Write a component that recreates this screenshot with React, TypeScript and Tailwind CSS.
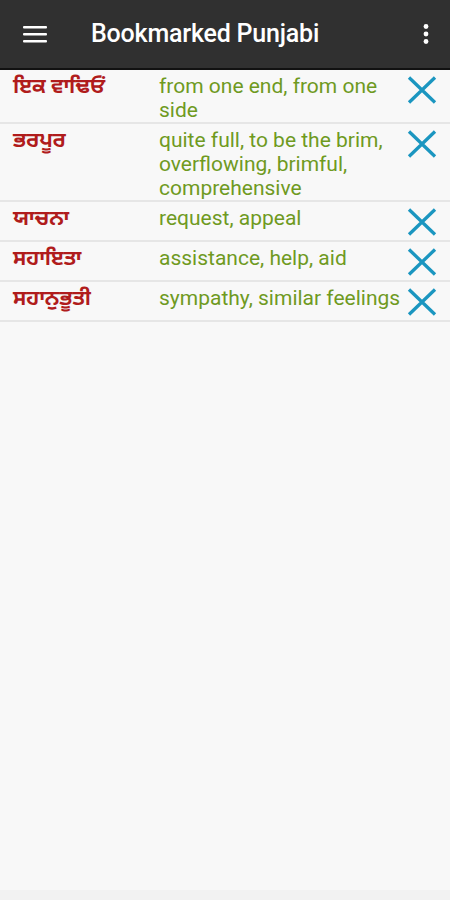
type Bookmark = {
  id: number;
  punjabi: string;
  english: string;
};

const bookmarks: Bookmark[] = [
  { id: 1, punjabi: 'ਇਕ ਵਾਢਿਓਂ', english: 'from one end, from one side' },
  { id: 2, punjabi: 'ਭਰਪੂਰ', english: 'quite full, to be the brim, overflowing, brimful, comprehensive' },
  { id: 3, punjabi: 'ਯਾਚਨਾ', english: 'request, appeal' },
  { id: 4, punjabi: 'ਸਹਾਇਤਾ', english: 'assistance, help, aid' },
  { id: 5, punjabi: 'ਸਹਾਨੁਭੂਤੀ', english: 'sympathy, similar feelings' },
];

const MenuIcon = () => (
  <svg width="24" height="20" viewBox="0 0 24 20" className="block">
    <rect x="0" y="2" width="24" height="2.6" rx="1" fill="#fff" />
    <rect x="0" y="9" width="24" height="2.6" rx="1" fill="#fff" />
    <rect x="0" y="16" width="24" height="2.6" rx="1" fill="#fff" />
  </svg>
);

const KebabIcon = () => (
  <svg width="6" height="22" viewBox="0 0 6 22" className="block">
    <circle cx="3" cy="3.5" r="2.4" fill="#fff" />
    <circle cx="3" cy="11" r="2.4" fill="#fff" />
    <circle cx="3" cy="18.5" r="2.4" fill="#fff" />
  </svg>
);

// remove button glyph, plain crossed strokes
const RemoveIcon = () => (
  <svg width="30" height="28" viewBox="0 0 30 28" className="block">
    <path d="M2 1.5 L28 26.5 M28 1.5 L2 26.5" stroke="#1b96c0" strokeWidth="3.3" strokeLinecap="butt" fill="none" />
  </svg>
);

export default function App() {
  return (
    <div
      className="w-[450px] h-[900px] bg-[#f8f8f8] flex flex-col overflow-hidden"
      style={{ fontFamily: 'Roboto, "Noto Sans Gurmukhi", "Noto Sans", sans-serif' }}
    >
      <header className="h-[70px] shrink-0 bg-[#303030] border-b-2 border-[#111] flex items-center">
        <div className="pl-[23px] w-[91px]">
          <MenuIcon />
        </div>
        <h1 className="flex-1 text-white text-[25px] font-medium tracking-[-0.2px]">Bookmarked Punjabi</h1>
        <div className="pr-[21px]">
          <KebabIcon />
        </div>
      </header>

      <div className="flex-1">
        {bookmarks.map((b) => (
          <div key={b.id} className="flex items-start border-b-2 border-[#e6e6e6] pt-[4px]">
            <div className="w-[159px] shrink-0 pl-[13px] text-[#b01c1c] text-[21px] font-bold leading-6">
              {b.punjabi}
            </div>
            <div className="flex-1 text-[#6f9a1f] text-[21px] leading-6">{b.english}</div>
            <div className="w-[45px] h-[34px] shrink-0 pt-[2px] pl-[2px]">
              <RemoveIcon />
            </div>
          </div>
        ))}
      </div>

      <div className="h-[10px] shrink-0 bg-[#f2f2f2]" />
    </div>
  );
}
